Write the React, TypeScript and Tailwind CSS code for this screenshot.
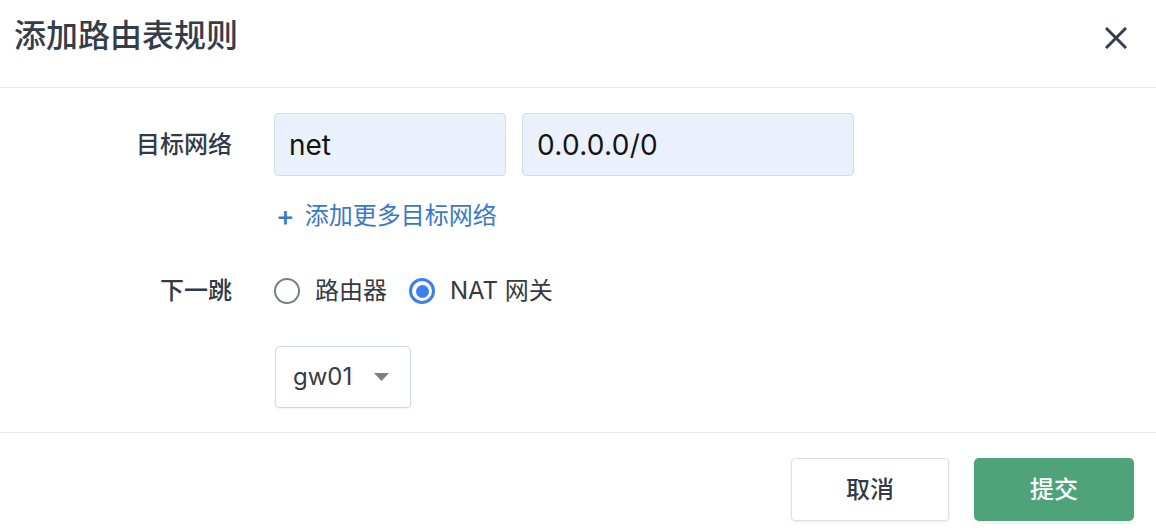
import { useState } from "react";

const font = "font-['Inter','Noto_Sans_CJK_SC',sans-serif]";

function Radio({ checked, label, onClick }: { checked: boolean; label: string; onClick: () => void }) {
  return (
    <button type="button" onClick={onClick} className="flex items-center gap-[15px]">
      {checked ? (
        <span className="flex h-[26px] w-[26px] items-center justify-center rounded-full border-[3px] border-[#3b7ff0]">
          <span className="h-[13px] w-[13px] rounded-full bg-[#3b7ff0]" />
        </span>
      ) : (
        <span className="h-[26px] w-[26px] rounded-full border-2 border-[#7a7d82]" />
      )}
      <span className="text-[24px] leading-[32px] text-[#353a42]">{label}</span>
    </button>
  );
}

export default function App() {
  const [hop, setHop] = useState("nat");

  return (
    <div className={`flex h-[532px] w-[1156px] flex-col bg-white ${font}`}>
      <div className="flex h-[88px] shrink-0 items-start justify-between border-b border-[#e6e7e9] pl-[14px] pr-[29px] pt-[16px]">
        <h1 className="text-[32px] font-medium leading-[40px] text-[#353d4b]">添加路由表规则</h1>
        <button type="button" className="mt-[11px] text-[#363d4b]">
          <svg width="22" height="22" viewBox="0 0 22 22" fill="none" stroke="currentColor" strokeWidth="3" strokeLinecap="square">
            <path d="M2 2 L20 20 M20 2 L2 20" />
          </svg>
        </button>
      </div>

      <div className="flex flex-1 flex-col border-b border-[#e6e7e9] pt-[25px]">
        <div className="flex items-center">
          <div className="w-[232px] text-right text-[24px] font-medium leading-[32px] text-[#333a47]">目标网络</div>
          <div className="ml-[42px] flex gap-[16px]">
            <input
              defaultValue="net"
              className="h-[63px] w-[232px] rounded-[4px] border border-[#d5dce8] bg-[#ebf1fc] px-[14px] text-[28px] text-[#141414] outline-none"
            />
            <input
              defaultValue="0.0.0.0/0"
              className="h-[63px] w-[332px] rounded-[4px] border border-[#d5dce8] bg-[#ebf1fc] px-[14px] text-[28px] tracking-[0.3px] text-[#141414] outline-none"
            />
          </div>
        </div>

        <button type="button" className="ml-[276px] mt-[24px] flex items-center gap-[10px] self-start text-[24px] leading-[32px] text-[#3a79c8]">
          <span className="text-[28px] font-medium">+</span>
          <span>添加更多目标网络</span>
        </button>

        <div className="mt-[43px] flex items-center">
          <div className="w-[232px] text-right text-[24px] font-medium leading-[32px] text-[#333a47]">下一跳</div>
          <div className="ml-[42px] flex items-center gap-[22px]">
            <Radio checked={hop === "router"} label="路由器" onClick={() => setHop("router")} />
            <Radio checked={hop === "nat"} label="NAT 网关" onClick={() => setHop("nat")} />
          </div>
        </div>

        <div className="ml-[275px] mt-[39px] flex h-[62px] w-[136px] items-center justify-between rounded-[4px] border border-[#d3d7de] bg-white pl-[17px] pr-[21px] shadow-[0_1px_2px_rgba(0,0,0,0.05)]">
          <span className="text-[24px] text-[#353a42]">gw01</span>
          <svg width="15" height="8" viewBox="0 0 15 8">
            <path d="M0 0 H15 L7.5 8 Z" fill="#7b7f86" />
          </svg>
        </div>
      </div>

      <div className="flex h-[99px] shrink-0 items-start justify-end gap-[25px] pr-[22px] pt-[25px]">
        <button type="button" className="h-[63px] w-[158px] rounded-[4px] border border-[#dcdfe4] bg-white text-[24px] font-medium text-[#333a47] shadow-[0_1px_3px_rgba(0,0,0,0.08)]">
          取消
        </button>
        <button type="button" className="h-[63px] w-[160px] rounded-[5px] bg-[#4ea378] text-[24px] font-medium text-white shadow-[0_2px_4px_rgba(0,0,0,0.08)]">
          提交
        </button>
      </div>
    </div>
  );
}
